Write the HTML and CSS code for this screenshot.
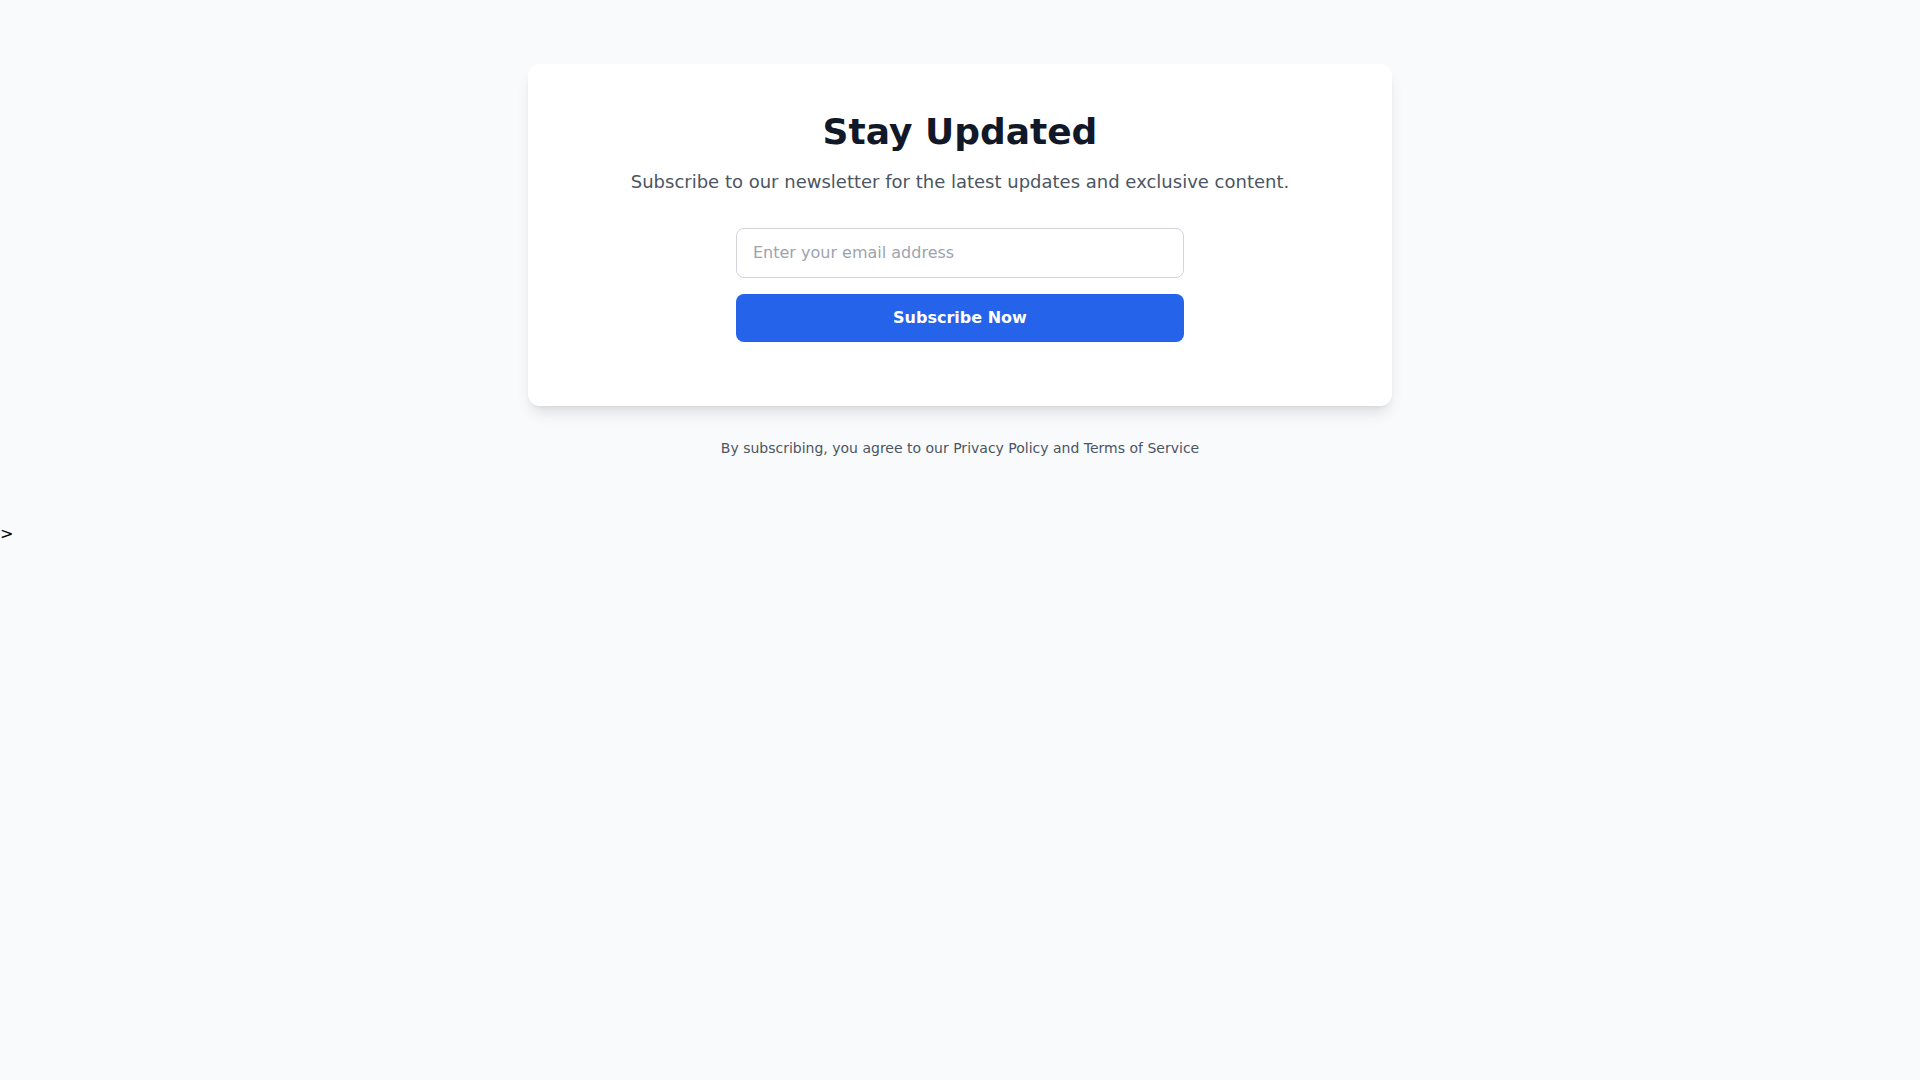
FILE: index.html
```html
<!DOCTYPE html>
<html lang="en">
<head>
    <meta charset="UTF-8">
    <meta name="viewport" content="width=device-width, initial-scale=1.0">
    <title>Newsletter</title>
    <link rel="stylesheet" href="styles.css">
</head>
<body>

    <div class="page">
        <!-- Newsletter card -->
        <div class="card">
            <h1>Stay Updated</h1>
            <p class="lead">Subscribe to our newsletter for the latest updates and exclusive content.</p>
            <form class="signup" onsubmit="return false;">
                <input type="email" placeholder="Enter your email address">
                <button type="submit">Subscribe Now</button>
            </form>
        </div>

        <p class="fine-print">By subscribing, you agree to our Privacy Policy and Terms of Service</p>
    </div>
>
</body>
</html>
```

FILE: styles.css
```css
/* Reset */
* {
    margin: 0;
    padding: 0;
    box-sizing: border-box;
}

body {
    font-family: "DejaVu Sans", sans-serif;
    font-size: 16px;
    line-height: 1.5;
    background-color: #f9fafb;
    color: #000;
}

/* Layout */
.page {
    max-width: 896px;
    margin: 0 auto;
    padding: 64px 16px;
}

/* Card */
.card {
    background-color: white;
    border-radius: 12px;
    box-shadow: 0 10px 15px -3px rgba(0, 0, 0, 0.1), 0 4px 6px -4px rgba(0, 0, 0, 0.1);
    padding: 48px 48px 64px;
    text-align: center;
}

.card h1 {
    font-size: 36px;
    line-height: 40px;
    font-weight: 700;
    color: #111827;
    margin-bottom: 16px;
}

.lead {
    font-size: 18px;
    line-height: 28px;
    color: #4b5563;
    margin-bottom: 32px;
}

/* Form */
.signup {
    max-width: 448px;
    margin: 0 auto;
    display: flex;
    flex-direction: column;
    gap: 16px;
}

.signup input {
    font-family: inherit;
    font-size: 16px;
    line-height: 24px;
    padding: 12px 16px;
    border: 1px solid #d1d5db;
    border-radius: 8px;
    color: #111827;
    outline: none;
}

.signup input::placeholder {
    color: #9ca3af;
}

.signup button {
    font-family: inherit;
    font-size: 16px;
    line-height: 24px;
    font-weight: 700;
    padding: 12px 16px;
    border: none;
    border-radius: 8px;
    background-color: #2563eb;
    color: white;
    cursor: pointer;
}

.signup button:hover {
    background-color: #1d4ed8;
}

/* Footer note */
.fine-print {
    margin-top: 32px;
    font-size: 14px;
    line-height: 20px;
    color: #4b5563;
    text-align: center;
}
```
